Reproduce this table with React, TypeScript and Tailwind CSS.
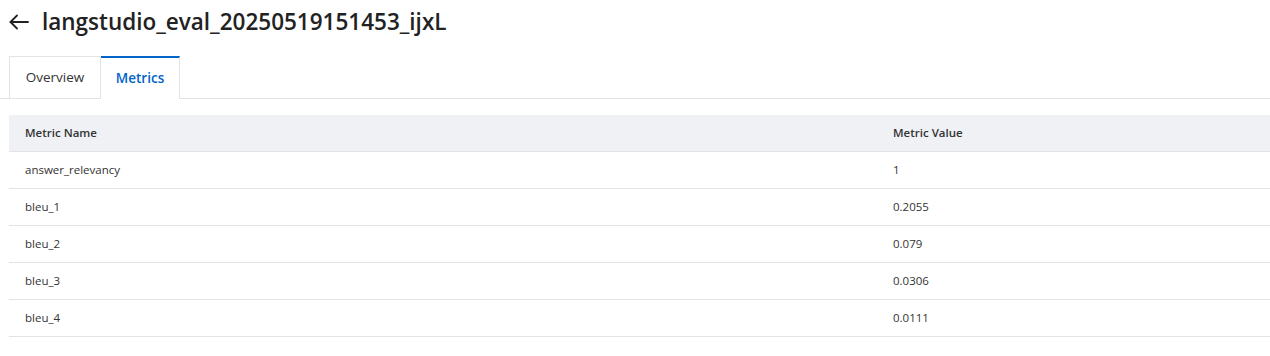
const ROWS = [
  { name: "answer_relevancy", value: "1" },
  { name: "bleu_1", value: "0.2055" },
  { name: "bleu_2", value: "0.079" },
  { name: "bleu_3", value: "0.0306" },
  { name: "bleu_4", value: "0.0111" },
];

export default function App() {
  return (
    <div className="w-[1270px] h-[356px] bg-white text-[#333] font-['Open_Sans','Noto_Sans',sans-serif] overflow-hidden">
      {/* header */}
      <div className="flex items-center h-[44px] pl-[9px] gap-[13px]">
        <svg width="20" height="16" viewBox="0 0 20 16" fill="none" stroke="#222" strokeWidth="1.8" strokeLinecap="round" strokeLinejoin="round">
          <path d="M19 8H1.5" />
          <path d="M8 1.5L1.5 8L8 14.5" />
        </svg>
        <h1 className="text-[22.5px] font-semibold text-[#222]">
          langstudio_eval_20250519151453_ijxL
        </h1>
      </div>

      {/* tabs */}
      <div className="flex mt-[12px] pl-[9px] h-[43px] border-b border-[#e3e3e3]">
        <button className="w-[92px] h-[43px] text-[13.5px] text-[#333] border border-[#e3e3e3] bg-white">
          Overview
        </button>
        <button className="w-[79px] h-[43px] text-[13.5px] font-semibold text-[#0064c8] border-r border-[#e3e3e3] border-t-2 border-t-[#0064c8] bg-white -mb-px">
          Metrics
        </button>
      </div>

      {/* table */}
      <div className="mt-[16px] ml-[9px] text-[11.5px]">
        <div className="grid grid-cols-[868px_1fr] h-[37px] items-center bg-[#eff1f5] border-b border-[#e3e3e3] font-semibold text-[#333]">
          <div className="pl-[16px]">Metric Name</div>
          <div className="pl-[16px]">Metric Value</div>
        </div>
        {ROWS.map((r) => (
          <div
            key={r.name}
            className="grid grid-cols-[868px_1fr] h-[37px] items-center border-b border-[#e3e3e3]"
          >
            <div className="pl-[16px]">{r.name}</div>
            <div className="pl-[16px]">{r.value}</div>
          </div>
        ))}
      </div>
    </div>
  );
}
